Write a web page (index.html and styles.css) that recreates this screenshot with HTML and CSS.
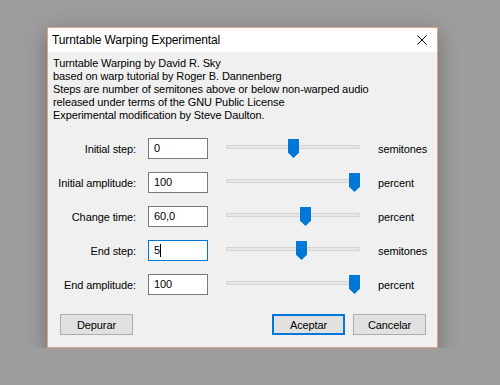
FILE: index.html
```html
<!DOCTYPE html>
<html lang="en">
    <head>
        <meta charset="UTF-8" />
        <title>Turntable Warping Experimental</title>
        <link rel="stylesheet" href="styles.css">
    </head>
    <body>
        <div class="dialog">
            <div class="titlebar">
                <span class="title">Turntable Warping Experimental</span>
                <svg class="close" width="10" height="10" viewBox="0 0 10 10">
                    <path d="M0.5 0.5 L9.5 9.5 M9.5 0.5 L0.5 9.5" stroke="#000" stroke-width="1" fill="none" />
                </svg>
            </div>

            <div class="content">
                <div class="info">
                    <p>Turntable Warping by David R. Sky</p>
                    <p>based on warp tutorial by Roger B. Dannenberg</p>
                    <p>Steps are number of semitones above or below non-warped audio</p>
                    <p>released under terms of the GNU Public License</p>
                    <p>Experimental modification by Steve Daulton.</p>
                </div>

                <!-- controls -->
                <div class="fields">
                    <label class="lbl">Initial step:</label>
                    <div class="box">0</div>
                    <div class="slider"><div class="track"></div><div class="thumb" style="left: 62px"></div></div>
                    <span class="unit">semitones</span>

                    <label class="lbl">Initial amplitude:</label>
                    <div class="box">100</div>
                    <div class="slider"><div class="track"></div><div class="thumb" style="left: 123px"></div></div>
                    <span class="unit">percent</span>

                    <label class="lbl">Change time:</label>
                    <div class="box">60,0</div>
                    <div class="slider"><div class="track"></div><div class="thumb" style="left: 74px"></div></div>
                    <span class="unit">percent</span>

                    <label class="lbl">End step:</label>
                    <div class="box focus">5<span class="caret"></span></div>
                    <div class="slider"><div class="track"></div><div class="thumb" style="left: 70px"></div></div>
                    <span class="unit">semitones</span>

                    <label class="lbl">End amplitude:</label>
                    <div class="box">100</div>
                    <div class="slider"><div class="track"></div><div class="thumb" style="left: 123px"></div></div>
                    <span class="unit">percent</span>
                </div>

                <div class="buttons">
                    <button class="btn">Depurar</button>
                    <div class="spacer"></div>
                    <button class="btn default">Aceptar</button>
                    <button class="btn">Cancelar</button>
                </div>
            </div>
        </div>
    </body>
</html>
```

FILE: styles.css
```css
* {
    margin: 0px;
    padding: 0px;
    box-sizing: border-box;
}

body {
    background-color: #9d9d9d;
    padding: 27px 0 0 47px;
    font-family: "Liberation Sans", Arial, sans-serif;
    font-size: 11px;
    letter-spacing: -0.1px;
    color: #000;
}

.dialog {
    width: 391px;
    height: 321px;
    border: 1px solid #dca684;
    background-color: #f0f0f0;
    box-shadow: 0 6px 20px rgba(0, 0, 0, 0.3);
    display: flex;
    flex-direction: column;
}

/* 타이틀 */
.titlebar {
    height: 24px;
    background-color: #fff;
    display: flex;
    align-items: center;
    justify-content: space-between;
    padding: 0 10px 0 4px;
}
.title {
    font-size: 12px;
}

.content {
    flex: 1;
    padding: 5px 11px 12px 5px;
    display: flex;
    flex-direction: column;
}

.info p {
    line-height: 13px;
    white-space: nowrap;
}

/* 입력 줄 */
.fields {
    margin-top: 16px;
    display: grid;
    grid-template-columns: 83px 60px 140px auto;
    column-gap: 12px;
    row-gap: 13px;
    align-items: center;
}
.fields .slider {
    margin-left: 6px;
}
.fields .unit {
    margin-left: 6px;
}
.lbl {
    display: flex;
    justify-content: flex-end;
    white-space: nowrap;
}
.box {
    height: 21px;
    border: 1px solid #7a7a7a;
    background-color: #fff;
    padding: 0 5px;
    line-height: 19px;
}
.box.focus {
    border-color: #0078d7;
}
.caret {
    display: inline-block;
    width: 1px;
    height: 13px;
    background-color: #000;
    vertical-align: -3px;
}

.slider {
    position: relative;
    height: 21px;
}
.track {
    margin-top: 7px;
    height: 4px;
    border: 1px solid #d6d6d6;
    background-color: #e7e7e7;
}
.thumb {
    position: absolute;
    top: 1px;
    width: 11px;
    height: 19px;
    background-color: #0078d7;
    clip-path: polygon(0 0, 100% 0, 100% 72%, 50% 100%, 0 72%);
}

/* 버튼 */
.buttons {
    margin-top: auto;
    display: flex;
    gap: 8px;
    padding-left: 7px;
}
.spacer {
    flex: 1;
}
.btn {
    width: 73px;
    height: 21px;
    font-family: inherit;
    font-size: 11px;
    letter-spacing: inherit;
    color: #000;
    background-color: #e1e1e1;
    border: 1px solid #adadad;
}
.btn.default {
    border: 2px solid #0078d7;
}
```
